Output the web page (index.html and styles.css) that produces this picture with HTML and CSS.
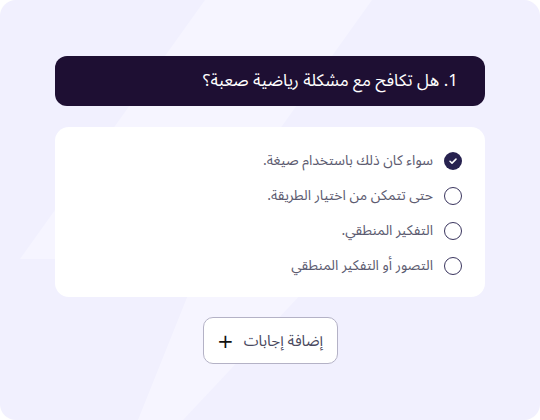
FILE: index.html
```html
<!DOCTYPE html>
<html lang="ar" dir="rtl">
<head>
<meta charset="utf-8">
<link rel="stylesheet" href="styles.css">
</head>
<body>
<div class="frame">
  <div class="question">1. هل تكافح مع مشكلة رياضية صعبة؟</div>
  <div class="options">
    <div class="opt">
      <span class="radio checked"><svg viewBox="0 0 18 18" width="18" height="18"><circle cx="9" cy="9" r="9" fill="#27224f"/><path d="M6 9.2l2 1.9 4-4" fill="none" stroke="#fff" stroke-width="1.5" stroke-linecap="round" stroke-linejoin="round"/></svg></span>
      <span class="label">سواء كان ذلك باستخدام صيغة.</span>
    </div>
    <div class="opt">
      <span class="radio"></span>
      <span class="label">حتى تتمكن من اختيار الطريقة.</span>
    </div>
    <div class="opt">
      <span class="radio"></span>
      <span class="label">التفكير المنطقي.</span>
    </div>
    <div class="opt">
      <span class="radio"></span>
      <span class="label">التصور أو التفكير المنطقي</span>
    </div>
  </div>
  <div class="actions">
    <button class="add"><span class="add-text">إضافة إجابات</span><span class="plus">+</span></button>
  </div>
</div>
</body>
</html>
```
FILE: styles.css
```css
html, body {
  margin: 0;
  padding: 0;
  background: #ffffff;
}
body {
  font-family: "Noto Sans Arabic", "Noto Sans", "DejaVu Sans", sans-serif;
}
.frame {
  width: 540px;
  height: 420px;
  box-sizing: border-box;
  border-radius: 16px;
  padding: 56px 55px 0 55px;
  background-color: #f1f0fe;
  background-image: url("data:image/svg+xml,%3Csvg xmlns='http://www.w3.org/2000/svg' width='540' height='420'%3E%3Cpolygon points='205,0 372,0 187,259 20,259' fill='%23f6f5ff'/%3E%3Cpolygon points='190,290 305,290 183,420 138,420' fill='%23f6f5ff'/%3E%3C/svg%3E");
  background-repeat: no-repeat;
  display: flex;
  flex-direction: column;
  overflow: hidden;
}
.question {
  height: 50px;
  box-sizing: border-box;
  background: #1e0f33;
  border-radius: 12px;
  color: #ffffff;
  font-size: 17px;
  display: flex;
  align-items: center;
  padding: 0 27px;
}
.options {
  margin-top: 21px;
  background: #ffffff;
  border-radius: 14px;
  padding: 16px 23px 14px 23px;
  display: flex;
  flex-direction: column;
}
.opt {
  height: 35px;
  display: flex;
  align-items: center;
  gap: 11px;
}
.radio {
  width: 18px;
  height: 18px;
  box-sizing: border-box;
  border: 1.5px solid #3a355e;
  border-radius: 50%;
  flex: none;
  display: flex;
}
.radio.checked {
  border: none;
}
.label {
  font-size: 14px;
  color: #5c5b70;
}
.actions {
  margin-top: 20px;
  display: flex;
  justify-content: center;
}
.add {
  width: 135px;
  height: 47px;
  background: #ffffff;
  border: 1px solid #b4b2c6;
  border-radius: 10px;
  font-family: inherit;
  display: flex;
  align-items: center;
  justify-content: center;
  gap: 10px;
  padding: 0;
}
.add-text {
  font-size: 15px;
  color: #4a4960;
}
.plus {
  font-size: 20px;
  font-weight: 500;
  color: #111111;
  font-family: "DejaVu Sans", sans-serif;
}
```
